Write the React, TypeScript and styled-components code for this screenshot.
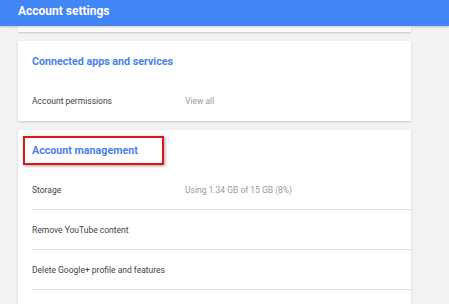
import React from 'react';
import styled, { createGlobalStyle } from 'styled-components';

const GlobalStyle = createGlobalStyle`
  html, body {
    margin: 0;
    padding: 0;
    background: #f2f2f2;
    font-family: Roboto, "Liberation Sans", Arial, sans-serif;
  }
`;

interface Row {
  label: string;
  value?: string;
}

const apps: Row[] = [{ label: 'Account permissions', value: 'View all' }];

const management: Row[] = [
  { label: 'Storage', value: 'Using 1.34 GB of 15 GB (8%)' },
  { label: 'Remove YouTube content' },
  { label: 'Delete Google+ profile and features' },
];

const App: React.FC = () => {
  return (
    <Page>
      <GlobalStyle />
      <Header>
        <HeaderTitle>Account settings</HeaderTitle>
      </Header>
      <Content>
        <Card $height={6} />
        <Card $height={80}>
          <CardTitle>Connected apps and services</CardTitle>
          <PlainRow>
            <Label>{apps[0].label}</Label>
            <Value>{apps[0].value}</Value>
          </PlainRow>
        </Card>
        <Card $grow>
          <CardTitle $tall>
            <Highlight>Account management</Highlight>
          </CardTitle>
          <List>
            {management.map((row) => (
              <ListRow key={row.label}>
                <Label>{row.label}</Label>
                {row.value && <Value>{row.value}</Value>}
              </ListRow>
            ))}
          </List>
        </Card>
      </Content>
    </Page>
  );
};

const Page = styled.div`
  width: 449px;
  height: 304px;
  overflow: hidden;
  background: #f2f2f2;
  display: flex;
  flex-direction: column;
`;

const Header = styled.div`
  position: relative;
  z-index: 2;
  flex: none;
  height: 26px;
  background: #4285f4;
  box-shadow: 0 1px 2px rgba(0, 0, 0, 0.2);
  display: flex;
  align-items: center;
  padding: 0 18px;
`;

const HeaderTitle = styled.div`
  color: #fff;
  font-size: 12px;
  font-weight: 700;
  margin-top: -5px;
`;

const Content = styled.div`
  flex: 1;
  display: flex;
  flex-direction: column;
  gap: 9px;
  padding: 0 38px 0 18px;
`;

const Card = styled.div<{ $height?: number; $grow?: boolean }>`
  background: #fff;
  box-shadow: 0 1px 2px rgba(0, 0, 0, 0.18);
  height: ${(p) => (p.$height ? `${p.$height}px` : 'auto')};
  flex: ${(p) => (p.$grow ? '1 0 auto' : 'none')};
  padding-left: 14px;
  box-sizing: border-box;
`;

const CardTitle = styled.div<{ $tall?: boolean }>`
  color: #4a80ec;
  font-size: 10.7px;
  font-weight: 700;
  padding-top: 14px;
  height: ${(p) => (p.$tall ? '26px' : '22px')};
  line-height: 13px;
`;

const Highlight = styled.span`
  position: relative;
  &::after {
    content: '';
    position: absolute;
    left: -9px;
    top: -8px;
    width: 137px;
    height: 25px;
    border: 2px solid #e0141c;
    box-shadow: 1px 1px 3px rgba(0, 0, 0, 0.35);
  }
`;

const PlainRow = styled.div`
  display: flex;
  align-items: center;
  height: 20px;
  margin-top: 14px;
`;

const List = styled.div``;

const ListRow = styled.div`
  display: flex;
  align-items: center;
  height: 39px;
  border-bottom: 1px solid #e3e3e3;
`;

const Label = styled.div`
  width: 153px;
  color: #444;
  font-size: 8.5px;
`;

const Value = styled.div`
  color: #999;
  font-size: 8.5px;
`;

export default App;
